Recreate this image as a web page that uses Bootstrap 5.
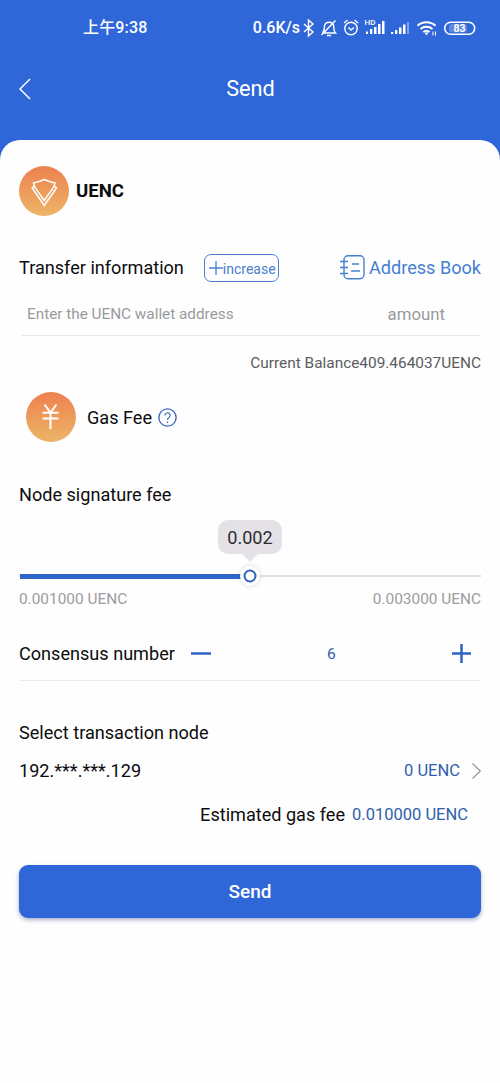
<!DOCTYPE html>
<html lang="en">
<head>
<meta charset="utf-8">
<meta name="viewport" content="width=device-width, initial-scale=1">
<title>Send</title>
<link href="https://cdn.jsdelivr.net/npm/bootstrap@5.3.0/dist/css/bootstrap.min.css" rel="stylesheet">
<style>
body{font-family:Roboto,"Noto Sans CJK SC",sans-serif;background:#2f67d8;color:#0c0c0e;font-size:18.1px;line-height:24px;height:1083px;overflow:hidden}
svg{display:block;flex:none}
.statusbar{height:54px;padding:1px 24px 0 83px;font-size:16px}
.clock{letter-spacing:.15px}
.titlebar{height:86px;padding:0 19px 17px}
.titlebar h1{font-size:21.700px;font-weight:400;line-height:28px;padding-right:11px}
.sheet{height:943px;background:#fefefe;border-radius:20px 20px 0 0;padding:26px 19px 0}
.r24{height:24px}
.coin-row{height:50px}
.coin{font-size:18.600px;margin-left:7px}
.xfer{height:28px;margin-top:38px}
.add-btn{width:75px;height:28px;border:1.5px solid #4a80cf;border-radius:7px;color:#4a80cf;font-size:14px;padding:1px 3px 0 4px;margin-left:20px;background:none}
.link-blue{color:#4380d0}
.fields{height:44px;margin:10px 0 0 3px;border-bottom:1px solid #e6e6e9;color:#9a9a9c;font-size:15.300px;padding:0 36px 0 5px}
.amt{font-size:16.800px}
.balance{margin-top:15px;font-size:15.400px;color:#5c5c5e}
.gas{height:50px;margin:17px 0 0 7px}
.slider-box{height:80px}
.rail{left:0;right:0;top:68px;height:2px;background:#e1e1e5}
.rail-fill{left:1px;top:67px;height:5px;background:#2f66cc}
.thumb{top:59px;width:20px;height:20px;background:#fff;border-radius:50%;box-shadow:0 0 4px rgba(60,70,90,.22);transform:translateX(-50%)}
.tip{top:13px;width:64px;height:34px;padding-top:1px;border-radius:10px;background:#e4e2e6;color:#2c2a33;transform:translateX(-50%)}
.tip::after{content:"";position:absolute;left:24px;top:34px;border:8px solid transparent;border-top-color:#e4e2e6;border-bottom:0}
.limits{font-size:15.400px;color:#9c9c9e}
.consensus{height:54px;margin-top:16px;border-bottom:1px solid #ececef}
.val{color:#2f5fae;font-size:16.5px}
.count{font-size:15.500px}
.send-btn{height:53px;margin-top:38px;padding-top:2px;border:0;border-radius:9px;background:#2f67d8;color:#fff;font-size:19px;font-weight:500;box-shadow:0 2px 4px rgba(40,60,130,.4)}
</style>
</head>
<body>
<div class="statusbar d-flex align-items-center justify-content-between text-white">
  <span class="clock fw-medium">上午9:38</span>
  <div class="d-flex align-items-center">
    <span class="speed fw-medium">0.6K/s</span>
    <svg width="176" height="24" viewBox="0 0 176 24" fill="none" stroke="#fff" stroke-width="1.4">
      <path d="M4 8l9 8-4.500 4V4l4.500 4-9 8"/>
      <path d="M22.500 17h13c-2-2-1.500-4-1.800-7a4.700 4.700 0 0 0-9.200 0c-.3 3 0 5-2 7M27 19.500h4M35.500 4.500L21.500 19"/>
      <circle cx="51" cy="12.500" r="6.200"/><path d="M44 7l3.500-3M58 7l-3.500-3M48.500 11.500l2.500 2.500 3-2.500"/>
      <g stroke="none" fill="#fff"><text x="64.500" y="9" font-size="8" font-weight="500">HD</text>
        <path d="M66 15.500h2V18h-2zM70 13h2.300v5H70zM74 11h2.500v7H74zM78 8h2.500v10H78zM82 5h2.500v13H82zM91 16h2.300v2H91zM95 14h2.300v4H95zM99 11.500h2.500V18H99zM103 8.500h2.500V18H103z"/>
        <path d="M107 6h2v12h-2z" opacity=".4"/></g>
      <path d="M117.500 9.800a13.500 13.500 0 0 1 18 0M120.500 13a9.400 9.400 0 0 1 12 0M123.300 16a5 5 0 0 1 6.300 0" stroke-width="2"/>
      <path d="M124.500 16.500h4l-2 3z" fill="#fff" stroke="none"/>
      <path d="M133 15.500v4M135.500 15.500v4" stroke-width="1"/>
      <rect x="144.700" y="6.300" width="30" height="12" rx="6" stroke-width="1.500"/>
      <rect x="149" y="8" width="18" height="8.500" rx="3" fill="#8eaeea" stroke="none" opacity=".5"/>
      <text x="159.500" y="16" font-size="10.500" font-weight="700" text-anchor="middle" fill="#fff" stroke="none">83</text>
    </svg>
  </div>
</div>
<header class="titlebar d-flex align-items-center text-white">
  <svg width="12" height="22" viewBox="0 0 12 22" fill="none" stroke="#fff" stroke-width="1.500"><path d="M11 1L1 11l10 10"/></svg>
  <h1 class="flex-grow-1 text-center m-0">Send</h1>
</header>
<main class="sheet">
  <div class="coin-row d-flex align-items-center">
    <svg width="50" height="50" viewBox="0 0 50 50" fill="none" stroke="#fff" stroke-width="1.500">
      <defs><linearGradient id="sun" x2="0" y2="1"><stop stop-color="#ee8150"/><stop offset="1" stop-color="#ecb566"/></linearGradient></defs>
      <circle cx="25" cy="25" r="25" fill="url(#sun)" stroke="none"/>
      <path d="M14.500 17Q20 16 25.200 13.500 30.500 16 36 17L34.500 21.500 25.200 34.500 16 21.500zM15 20l-1.800 2L25.200 39.500 37.500 22l-2-2"/>
    </svg>
    <span class="coin fw-bold">UENC</span>
  </div>

  <div class="xfer d-flex align-items-center">
    <span class="t-info">Transfer information</span>
    <button class="add-btn d-flex align-items-center">
      <svg width="14" height="16" viewBox="0 0 14 16" stroke="currentColor" stroke-width="1.300"><path d="M0 7h14M7 0v14"/></svg><span class="inc">increase</span>
    </button>
    <a class="link-blue d-flex align-items-center ms-auto text-decoration-none" href="#">
      <svg width="25" height="26" viewBox="0 0 25 26" fill="none" stroke="currentColor" stroke-width="1.400"><rect x="4" y="0.700" width="20" height="23" rx="4"/><path d="M0 6.500h8M0 12.500h8M0 18.500h8M12 9h7M11 16h9"/></svg>
      <span class="book ms-1">Address Book</span>
    </a>
  </div>
  <div class="fields d-flex align-items-center justify-content-between"><span class="addr">Enter the UENC wallet address</span><span class="amt">amount</span></div>
  <div class="balance r24 text-end"><span class="bal">Current Balance409.464037UENC</span></div>

  <div class="gas d-flex align-items-center">
    <svg width="50" height="50" viewBox="0 0 50 50" fill="none" stroke="#fff" stroke-width="2">
      <circle cx="25" cy="25" r="25" fill="url(#sun)" stroke="none"/><path d="M18.500 12.500L24.500 20.500 30.500 12.500M16.500 20.700h16M16.500 26.500h16M24.500 20.500v16.500"/>
    </svg>
    <span class="gasfee" style="margin:1px 6px 0 11px">Gas Fee</span>
    <svg width="19" height="19" viewBox="0 0 18 18" fill="none" stroke="#3f68bd" stroke-width="1.300"><circle cx="9" cy="9" r="8.200"/><path d="M6.500 7a2.500 2.500 0 1 1 4 2Q9 10 9 11.300M9 12.700v1.500" stroke-width="1.100"/></svg>
  </div>

  <div class="r24" style="margin-top:41px"><span class="sig">Node signature fee</span></div>
  <div class="slider-box position-relative">
    <div class="rail position-absolute"></div>
    <div class="rail-fill position-absolute" style="width:calc(50% - 10px)"></div>
    <div class="tip position-absolute d-flex align-items-center justify-content-center" style="left:50%">0.002</div>
    <div class="thumb position-absolute d-flex align-items-center justify-content-center" style="left:50%"><svg width="14" height="14" viewBox="0 0 14 14" fill="none" stroke="#2f62c4" stroke-width="2"><circle cx="7" cy="7" r="5.500"/></svg></div>
  </div>
  <div class="limits r24 d-flex justify-content-between"><span class="lim">0.001000 UENC</span><span class="lim">0.003000 UENC</span></div>

  <div class="consensus d-flex align-items-center">
    <span class="cons">Consensus number</span>
    <svg class="ms-3" width="20" height="20" viewBox="0 0 20 20" stroke="#2f62c4" stroke-width="2.500"><path d="M0 9.500h20"/></svg>
    <span class="val count flex-grow-1 text-center">6</span>
    <svg style="margin-right:10px" width="19" height="20" viewBox="0 0 19 20" stroke="#2f62c4" stroke-width="2.500"><path d="M0 9.500h19M9.500 0v19"/></svg>
  </div>

  <div class="r24" style="margin-top:40px"><span class="sel">Select transaction node</span></div>
  <div class="r24 d-flex align-items-center" style="margin-top:14px">
    <span class="ip">192.***.***.129</span>
    <span class="val v0 ms-auto">0 UENC</span>
    <svg style="margin-left:12px" width="9" height="16" viewBox="0 0 9 16" fill="none" stroke="#99999c" stroke-width="1.200"><path d="M.5.500L8.300 8 .5 15.500"/></svg>
  </div>
  <div class="r24 d-flex justify-content-end" style="margin-top:20px;padding-right:13px"><span class="est">Estimated gas fee</span><span class="val v1" style="margin-left:7px">0.010000 UENC</span></div>
  <button class="send-btn w-100">Send</button>
</main>
<script src="https://cdn.jsdelivr.net/npm/bootstrap@5.3.0/dist/js/bootstrap.bundle.min.js"></script>
</body>
</html>
